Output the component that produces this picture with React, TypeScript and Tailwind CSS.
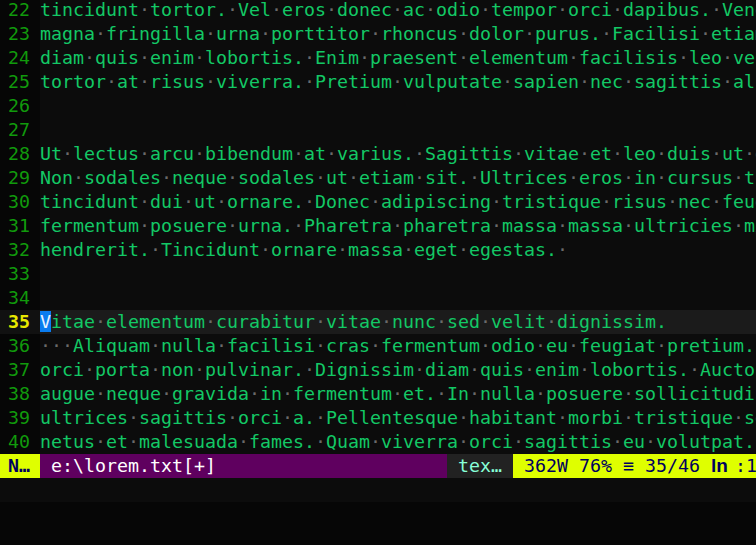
const lines: { n: number; text: string }[] = [
  { n: 22, text: "tincidunt tortor. Vel eros donec ac odio tempor orci dapibus. Venenatis a condimentum" },
  { n: 23, text: "magna fringilla urna porttitor rhoncus dolor purus. Facilisi etiam dignissim diam" },
  { n: 24, text: "diam quis enim lobortis. Enim praesent elementum facilisis leo vel fringilla est" },
  { n: 25, text: "tortor at risus viverra. Pretium vulputate sapien nec sagittis aliquam malesuada" },
  { n: 26, text: "" },
  { n: 27, text: "" },
  { n: 28, text: "Ut lectus arcu bibendum at varius. Sagittis vitae et leo duis ut diam quam nulla" },
  { n: 29, text: "Non sodales neque sodales ut etiam sit. Ultrices eros in cursus turpis massa" },
  { n: 30, text: "tincidunt dui ut ornare. Donec adipiscing tristique risus nec feugiat in fermentum" },
  { n: 31, text: "fermentum posuere urna. Pharetra pharetra massa massa ultricies mi quis" },
  { n: 32, text: "hendrerit. Tincidunt ornare massa eget egestas. " },
  { n: 33, text: "" },
  { n: 34, text: "" },
  { n: 35, text: "Vitae elementum curabitur vitae nunc sed velit dignissim." },
  { n: 36, text: "   Aliquam nulla facilisi cras fermentum odio eu feugiat pretium. Nibh ipsum" },
  { n: 37, text: "orci porta non pulvinar. Dignissim diam quis enim lobortis. Auctor urna nunc" },
  { n: 38, text: "augue neque gravida in fermentum et. In nulla posuere sollicitudin aliquam" },
  { n: 39, text: "ultrices sagittis orci a. Pellentesque habitant morbi tristique senectus et" },
  { n: 40, text: "netus et malesuada fames. Quam viverra orci sagittis eu volutpat. Odio" },
];

const CURRENT = 35;

const Line = ({ text, current }: { text: string; current: boolean }) => {
  const parts = text.split(/( )/);
  return (
    <>
      {parts.map((p, i) => {
        if (p === " ") {
          return (
            <span key={i} className="text-[#6a6a6a]">
              ·
            </span>
          );
        }
        if (current && i === 0 && p.length > 0) {
          return (
            <span key={i}>
              <span className="bg-[#0a7cf0] text-[#e8f2ff]">{p[0]}</span>
              {p.slice(1)}
            </span>
          );
        }
        return <span key={i}>{p}</span>;
      })}
    </>
  );
};

export default function App() {
  return (
    <div
      className="w-[756px] h-[545px] overflow-hidden bg-[#060606] text-[18.27px] leading-[24px]"
      style={{ fontFamily: '"DejaVu Sans Mono", "Liberation Mono", monospace' }}
    >
      <div className="-mt-[2px] flex flex-col">
        {lines.map(({ n, text }) => {
          const current = n === CURRENT;
          return (
            <div key={n} className="flex h-[24px] whitespace-pre">
              <div
                className={`w-[40px] shrink-0 pl-[8px] ${
                  current ? "bg-[#111111] text-[#e8e800] font-bold" : "bg-[#060606] text-[#119a0c]"
                }`}
              >
                {n}
              </div>
              <div
                className={`flex-1 overflow-hidden text-[#13c865] ${
                  current ? "bg-[#1b1b1b]" : "bg-[#0c0c0c]"
                }`}
              >
                <Line text={text} current={current} />
              </div>
            </div>
          );
        })}

        <div className="flex h-[24px] whitespace-pre">
          <div className="w-[40px] shrink-0 bg-[#dfff00] pl-[8px] font-bold text-[#00005f]">N…</div>
          <div className="w-[407px] shrink-0 bg-[#5f005f] text-[#ffffff]"> e:\lorem.txt[+]</div>
          <div className="w-[66px] shrink-0 bg-[#222222] text-[#87ffd7]"> tex…</div>
          <div className="flex flex-1 bg-[#dfff00] text-[#00005f]">
            <span>{" 362W 76% ≡ 35/46 "}</span>
            <span
              className="inline-block w-[24px] text-[19px] font-bold"
              style={{ fontFamily: '"Liberation Sans", Arial, sans-serif' }}
            >
              ln
            </span>
            <span>:1</span>
          </div>
        </div>

        <div className="h-[24px] bg-[#0c0c0c]" />
      </div>
    </div>
  );
}
